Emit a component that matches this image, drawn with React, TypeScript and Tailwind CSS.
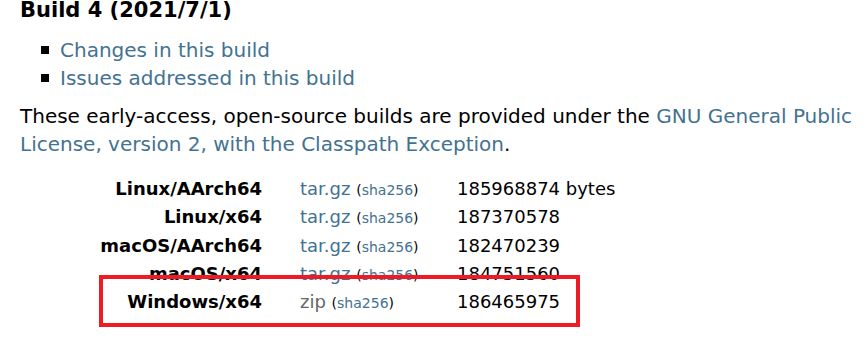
import React from 'react';

const builds = [
  { os: 'Linux/AArch64', file: 'tar.gz', size: '185968874 bytes' },
  { os: 'Linux/x64', file: 'tar.gz', size: '187370578' },
  { os: 'macOS/AArch64', file: 'tar.gz', size: '182470239' },
  { os: 'macOS/x64', file: 'tar.gz', size: '184751560' },
  { os: 'Windows/x64', file: 'zip', size: '186465975' },
];

const App: React.FC = () => {
  return (
    <div className="relative w-[868px] h-[352px] overflow-hidden bg-white pl-5 text-black font-['DejaVu_Sans',sans-serif]">
      {/* Heading */}
      <h3 className="text-[21px] leading-[20px] font-bold">Build 4 (2021/7/1)</h3>

      {/* Links */}
      <ul className="mt-4 text-[20px] leading-[28px]">
        <li className="flex items-center">
          <span className="ml-[21px] mr-[11px] w-2 h-2 bg-black" />
          <a className="text-[#437291]">Changes in this build</a>
        </li>
        <li className="flex items-center">
          <span className="ml-[21px] mr-[11px] w-2 h-2 bg-black" />
          <a className="text-[#437291]">Issues addressed in this build</a>
        </li>
      </ul>

      <p className="mt-[10px] text-[20px] leading-[28px]">
        These early-access, open-source builds are provided under the{' '}
        <a className="text-[#437291]">GNU General Public License, version 2, with the Classpath Exception</a>.
      </p>

      {/* Downloads */}
      <div className="mt-[17px] text-[18px] leading-[28.25px]">
        {builds.map((b) => (
          <div key={b.os} className="flex h-[28.25px]">
            <div className="w-[242px] text-right font-bold">{b.os}</div>
            <div className="ml-[38px] w-[157px]">
              <span className={b.file === 'zip' ? 'text-[#666666]' : 'text-[#437291]'}>{b.file}</span>{' '}
              <span className="text-[14px] leading-none text-[#437291]">
                <span className="text-black">(</span>sha256<span className="text-black">)</span>
              </span>
            </div>
            <div>{b.size}</div>
          </div>
        ))}
      </div>

      {/* Highlight box */}
      <div className="pointer-events-none absolute left-[99px] top-[275px] w-[481px] h-[52px] border-4 border-[#ed1c24]" />
    </div>
  );
};

export default App;
